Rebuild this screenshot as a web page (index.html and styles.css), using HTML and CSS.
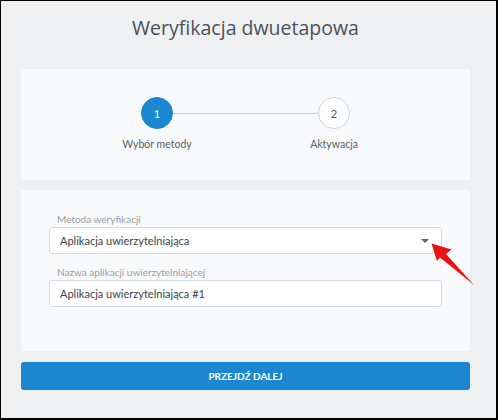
FILE: index.html
```html
<!DOCTYPE html>
<html lang="pl">
<head>
<meta charset="utf-8">
<title>Weryfikacja dwuetapowa</title>
<link rel="stylesheet" href="styles.css">
</head>
<body>
<div class="frame">
  <h1 class="title">Weryfikacja dwuetapowa</h1>
  <section class="card card-steps">
    <div class="stepper">
      <div class="circle circle-active">1</div>
      <div class="line"></div>
      <div class="circle">2</div>
      <div class="step-label">Wybór metody</div>
      <div class="step-label step-label-2">Aktywacja</div>
    </div>
  </section>
  <section class="card card-form">
    <label class="field-label">Metoda weryfikacji</label>
    <div class="control control-select">
      <span>Aplikacja uwierzytelniająca</span>
      <span class="caret"></span>
    </div>
    <label class="field-label field-label-2">Nazwa aplikacji uwierzytelniającej</label>
    <div class="control">Aplikacja uwierzytelniająca #1</div>
  </section>
  <button class="btn">PRZEJDŹ DALEJ</button>
  <svg class="arrow" width="498" height="420" viewBox="0 0 498 420">
    <polygon points="431.5,243.5 451.5,249.5 446,254 474,285 440,257.5 437,261" fill="#f0100f"/>
  </svg>
</div>
</body>
</html>
```
FILE: styles.css
```css
* { box-sizing: border-box; }
html, body { margin: 0; padding: 0; }
body {
  font-family: "Lato", "Open Sans", sans-serif;
  background: #000;
}
.frame {
  position: relative;
  width: 498px;
  height: 420px;
  border-style: solid;
  border-color: #000;
  border-width: 1px 2px 2px 1px;
  background: #eff0f2;
  padding: 0 26px 0 20px;
  display: flex;
  flex-direction: column;
  overflow: hidden;
}
.title {
  margin: 0;
  padding-top: 7px;
  height: 68px;
  line-height: 40px;
  text-align: center;
  font-family: "Open Sans", sans-serif;
  font-size: 19.5px;
  font-weight: 400;
  color: #4b5157;
}
.card {
  background: #f8f9fb;
}
.card-steps {
  height: 111px;
  padding-top: 28px;
  display: flex;
  justify-content: center;
}
.stepper {
  display: grid;
  grid-template-columns: 32px 145px 32px;
  grid-template-rows: 32px auto;
  row-gap: 8px;
}
.circle {
  width: 32px;
  height: 32px;
  border-radius: 50%;
  border: 1px solid #c9d2dc;
  background: #fff;
  color: #50565c;
  font-size: 11px;
  display: flex;
  align-items: center;
  justify-content: center;
}
.circle-active {
  background: #1a87d0;
  border-color: #1a87d0;
  color: #fff;
}
.line {
  align-self: center;
  height: 1px;
  background: #c6d0dc;
}
.step-label {
  grid-column: 1;
  justify-self: center;
  white-space: nowrap;
  font-size: 10.5px;
  color: #595f65;
  line-height: 14px;
}
.step-label-2 { grid-column: 3; }
.card-form {
  margin-top: 10px;
  height: 161px;
  padding: 23px 28px 0;
  display: flex;
  flex-direction: column;
}
.field-label {
  font-size: 10px;
  line-height: 12px;
  color: #9a9fa5;
  padding-left: 8px;
  margin-bottom: 2px;
}
.field-label-2 { margin-top: 12px; margin-bottom: 2px; }
.control {
  height: 27px;
  background: #fff;
  border: 1px solid #d6dce2;
  border-radius: 3px;
  padding: 0 10px;
  font-size: 11px;
  color: #3c4247;
  display: flex;
  align-items: center;
}
.control-select { justify-content: space-between; }
.caret {
  width: 0;
  height: 0;
  border-left: 4px solid transparent;
  border-right: 4px solid transparent;
  border-top: 4px solid #5f656b;
  margin-right: 2px;
}
.btn {
  margin-top: 11px;
  height: 28px;
  border: 0;
  border-radius: 3px;
  background: #1a87d0;
  color: #fff;
  font-family: inherit;
  font-size: 10px;
  font-weight: 700;
  padding: 0;
}
.arrow {
  position: absolute;
  left: -1px;
  top: -1px;
  pointer-events: none;
}
```
